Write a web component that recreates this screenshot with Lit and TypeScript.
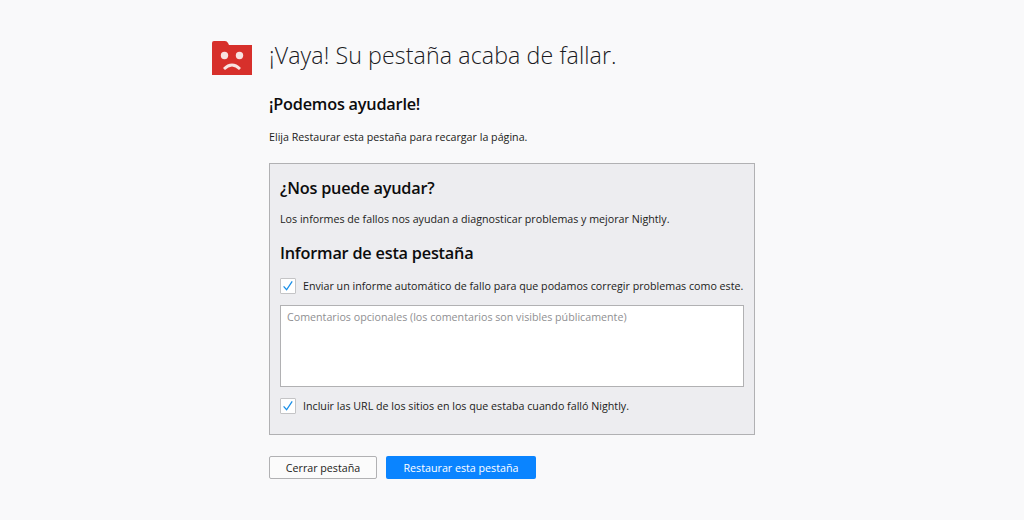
import { LitElement, html, css } from "lit";
import { customElement } from "lit/decorators.js";

const check = html`<svg class="tick" viewBox="0 0 16 16" width="16" height="16"><path d="M3.6 8.4 L6.6 11.8 L12.2 3.4" fill="none" stroke="#1a8fe8" stroke-width="1.3"/></svg>`;

@customElement("app-root")
export class AppRoot extends LitElement {
  static styles = css`
    :host { display: block; width: 1024px; height: 520px; background: #f9f9fa; color: #1c1c20; font-family: "Open Sans", "Noto Sans", sans-serif; font-size: 10.7px; overflow: hidden; }
    * { box-sizing: border-box; }
    .page { display: flex; padding: 39px 0 0 212px; }
    .icon { width: 40px; height: 35px; margin-right: 17px; flex: none; margin-top: 1px; }
    .main { width: 486px; display: flex; flex-direction: column; align-items: stretch; }
    h1 { margin: 0; font-size: 23.2px; font-weight: 300; line-height: 32px; color: #1a1a1e; white-space: nowrap; letter-spacing: 0.1px; }
    h2 { margin: 0; font-size: 16.3px; font-weight: 600; line-height: 22px; color: #0c0c0d; white-space: nowrap; letter-spacing: -0.22px; }
    p { margin: 0; line-height: 14px; white-space: nowrap; }
    .h-top { margin-top: 22px; }
    .p-top { margin-top: 15px; }
    .box { margin-top: 19px; height: 272px; background: #ededf0; border: 1px solid #b1b1b3; padding: 13px 10px 0; display: flex; flex-direction: column; }
    .box .p1 { margin-top: 13px; }
    .box .h2b { margin-top: 16px; }
    .row { display: flex; align-items: center; gap: 7px; height: 16px; white-space: nowrap; }
    .row.r1 { margin-top: 14px; }
    .row.r2 { margin-top: 11px; }
    .cb { width: 16px; height: 16px; background: #fff; border: 1px solid #c4c4c6; border-radius: 1px; flex: none; display: flex; }
    .tick { flex: none; margin: -1px; }
    .ta { margin-top: 11px; height: 82px; background: #fff; border: 1px solid #b1b1b3; padding: 4px 6px; color: #8f8f92; line-height: 14px; }
    .btns { display: flex; gap: 9px; margin-top: 21px; }
    .btn { height: 23px; display: flex; align-items: center; justify-content: center; border-radius: 2px; white-space: nowrap; }
    .sec { width: 108px; background: #fbfbfb; border: 1px solid #b1b1b3; }
    .pri { width: 150px; background: #0a84ff; color: #fff; }
  `;

  render() {
    return html`<div class="page">
      <svg class="icon" viewBox="0 0 40 35">
        <path d="M0 3 Q0 1 2 1 H13 Q15 1 16 3 L17 5 H40 V35 H0 Z" fill="#d7302b"/>
        <circle cx="12.5" cy="15.5" r="3.7" fill="#f8e3e1"/>
        <circle cx="27.5" cy="15.5" r="3.7" fill="#f8e3e1"/>
        <path d="M12 29 Q20 21 28 29" fill="none" stroke="#f8e3e1" stroke-width="2.8"/>
      </svg>
      <div class="main">
        <h1>¡Vaya! Su pestaña acaba de fallar.</h1>
        <h2 class="h-top">¡Podemos ayudarle!</h2>
        <p class="p-top">Elija Restaurar esta pestaña para recargar la página.</p>
        <div class="box">
          <h2>¿Nos puede ayudar?</h2>
          <p class="p1">Los informes de fallos nos ayudan a diagnosticar problemas y mejorar Nightly.</p>
          <h2 class="h2b">Informar de esta pestaña</h2>
          <div class="row r1"><span class="cb">${check}</span><span>Enviar un informe automático de fallo para que podamos corregir problemas como este.</span></div>
          <div class="ta">Comentarios opcionales (los comentarios son visibles públicamente)</div>
          <div class="row r2"><span class="cb">${check}</span><span>Incluir las URL de los sitios en los que estaba cuando falló Nightly.</span></div>
        </div>
        <div class="btns">
          <div class="btn sec">Cerrar pestaña</div>
          <div class="btn pri">Restaurar esta pestaña</div>
        </div>
      </div>
    </div>`;
  }
}
